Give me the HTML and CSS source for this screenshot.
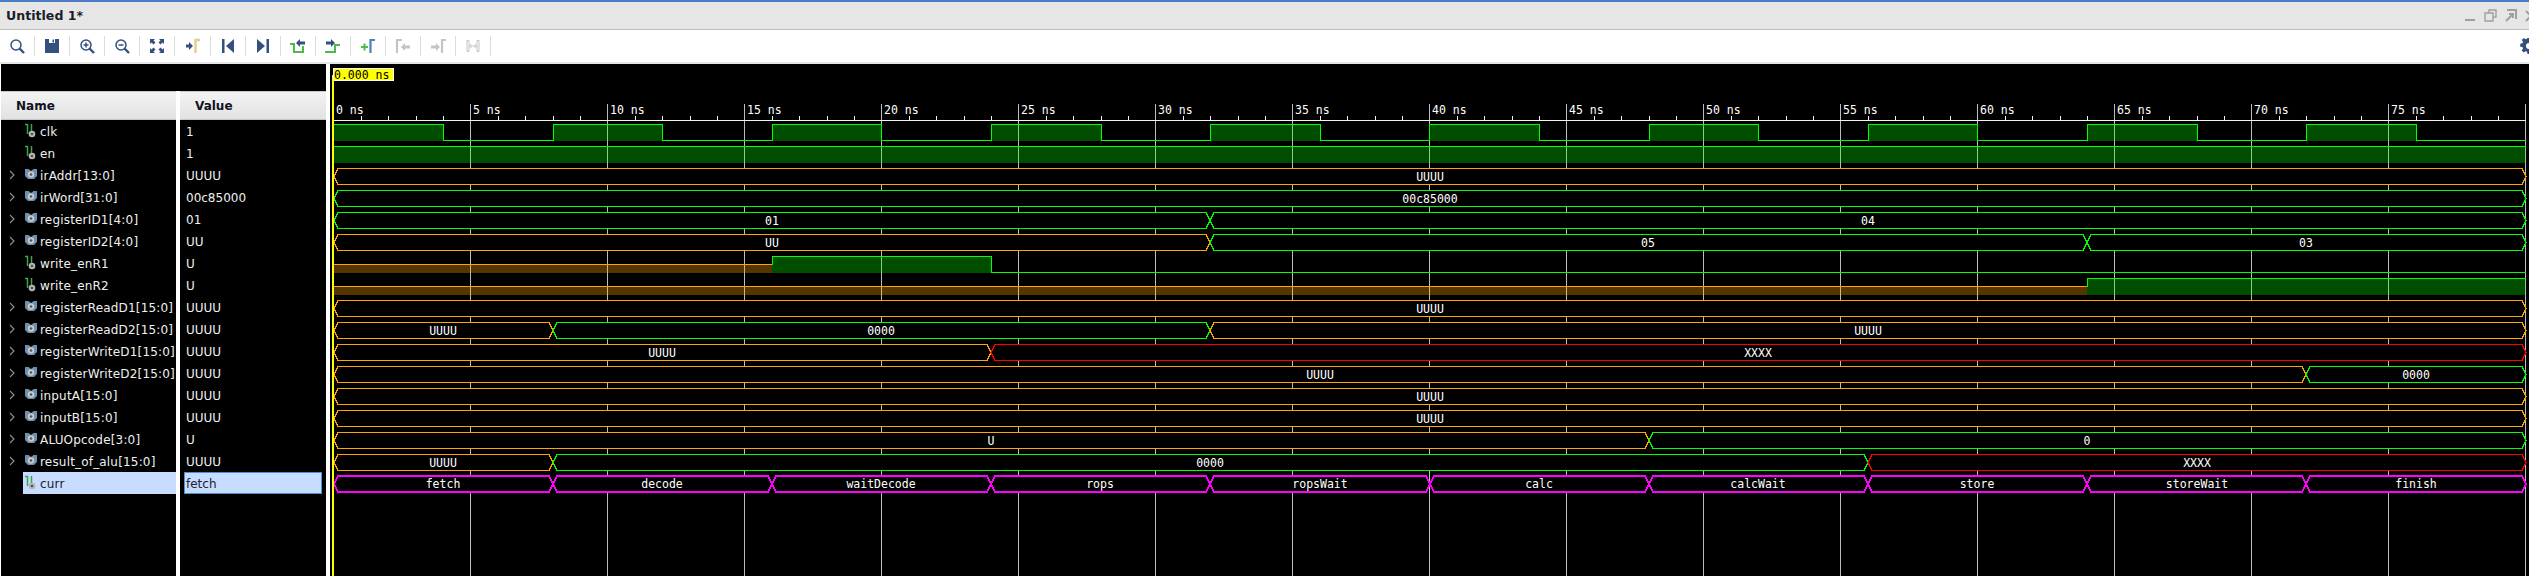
FILE: index.html
```html
<!DOCTYPE html>
<html lang="en">
<head>
<meta charset="utf-8">
<title>Untitled 1*</title>
<link rel="stylesheet" href="styles.css">
</head>
<body>
<svg class="defs" width="0" height="0" aria-hidden="true">
  <symbol id="caret" viewBox="0 0 6 10"><path d="M1 1l4 4-4 4" fill="none" stroke="#8a8a8a" stroke-width="1.2"/></symbol>
  <symbol id="bus" viewBox="0 0 14 12"><path d="M1 1h3.5L7 3l2.500-2H13v7l-3 3H4L1 8z" fill="#6f8fb0"/><circle cx="7" cy="6.500" r="3.200" fill="#c9c9c9"/><circle cx="7" cy="6.500" r="1.300" fill="#555"/></symbol>
  <symbol id="bit" viewBox="0 -1 14 16"><path d="M1 1.500h2.500V11M7.500 1v8" fill="none" stroke="#3fa34a" stroke-width="1.500"/><circle cx="8" cy="11" r="3.300" fill="#b4b4b4"/><circle cx="8" cy="11" r="1.300" fill="#555"/></symbol>
</svg>

<header class="titlebar">
  <span class="title">Untitled 1*</span>
  <div class="winctl">
    <svg class="wbtn" viewBox="0 0 14 14"><path d="M1 11h10" stroke="#a0a0a0" stroke-width="2"/></svg>
    <svg class="wbtn" viewBox="0 0 14 14"><path d="M5 4V1h7v7H9M1 4h8v8H1z" fill="none" stroke="#a0a0a0" stroke-width="1.400"/></svg>
    <svg class="wbtn" viewBox="0 0 14 14"><path d="M3 1h9v9M2 12l7-7M5 5h4v4" fill="none" stroke="#a0a0a0" stroke-width="2"/></svg>
    <svg class="wbtn" viewBox="0 0 14 14"><path d="M2 2l10 10M12 2L2 12" fill="none" stroke="#a0a0a0" stroke-width="2"/></svg>
  </div>
</header>

<nav class="toolbar">
  <span class="tool"><svg viewBox="0 0 16 16"><circle cx="7" cy="7" r="5" class="ln"/><path d="M10.500 10.500L15 15" class="ln thick"/></svg></span>
  <span class="tool"><svg viewBox="0 0 16 16"><path d="M1 1h14v14H1z" class="fl"/><path d="M5 1h6v4H5z" fill="#fff"/><path d="M8.500 1.500h1.500v3H8.500z" class="fl"/></svg></span>
  <span class="tool"><svg viewBox="0 0 16 16"><circle cx="7" cy="7" r="5" class="ln"/><path d="M10.500 10.500L15 15" class="ln thick"/><path d="M4.500 7h5M7 4.500v5" class="ln"/></svg></span>
  <span class="tool"><svg viewBox="0 0 16 16"><circle cx="7" cy="7" r="5" class="ln"/><path d="M10.500 10.500L15 15" class="ln thick"/><path d="M4.500 7h5" class="ln"/></svg></span>
  <span class="tool"><svg viewBox="0 0 16 16"><path d="M1 1h5L4.500 2.500l2 2-2 2-2-2L1 6zM15 1v5l-1.500-1.500-2 2-2-2 2-2L10 1zM1 15v-5l1.500 1.500 2-2 2 2-2 2L6 15zM15 15h-5l1.500-1.500-2-2 2-2 2 2L15 10z" class="fl"/></svg></span>
  <span class="tool"><svg viewBox="0 0 16 16"><path d="M1 6.500h3V4l4 4-4 4V9.500H1z" class="fl"/><path d="M10.500 15V2H15" fill="none" stroke="#e3cf85" stroke-width="2.400"/></svg></span>
  <span class="tool"><svg viewBox="0 0 16 16"><path d="M2 1h2.500v14H2zM14 1v14L6 8z" class="fl"/></svg></span>
  <span class="tool"><svg viewBox="0 0 16 16"><path d="M11.500 1H14v14h-2.500zM2 1v14l8-7z" class="fl"/></svg></span>
  <span class="tool"><svg viewBox="0 0 16 16"><path d="M0 6h4v8h9V8" fill="none" stroke="#4cbb4c" stroke-width="2"/><path d="M15 3.500H10V1L6 5l4 4V6.500h5z" class="fl"/></svg></span>
  <span class="tool"><svg viewBox="0 0 16 16"><path d="M0 14h10V7h5" fill="none" stroke="#4cbb4c" stroke-width="2"/><path d="M1 3.500h5V1l4 4-4 4V6.500H1z" class="fl"/></svg></span>
  <span class="tool"><svg viewBox="0 0 16 16"><path d="M1 9h7M4.500 5.500v7" fill="none" stroke="#4cbb4c" stroke-width="2"/><path d="M10.500 15V2H15" fill="none" stroke="#4a83b8" stroke-width="2.200"/></svg></span>
  <span class="tool"><svg viewBox="0 0 16 16"><path d="M2 15V2h5" class="gr"/><path d="M15 7.500h-5V5L6 9l4 4v-2.500h5z" fill="#c4c4c4"/></svg></span>
  <span class="tool"><svg viewBox="0 0 16 16"><path d="M1 7.500h5V5l4 4-4 4v-2.500H1z" fill="#c4c4c4"/><path d="M12 15V2h4" class="gr"/></svg></span>
  <span class="tool"><svg viewBox="0 0 16 16"><path d="M2 2.500h2v11H2zM12 2.500h2v11h-2z" fill="none" stroke="#c4c4c4"/><path d="M4.500 8h7M6.500 6l-2 2 2 2M9.500 6l2 2-2 2" fill="none" stroke="#c4c4c4"/></svg></span>
  <span class="tool-spacer"></span>
  <svg class="gear" viewBox="0 0 16 16"><path d="M6.500 0h3l.4 2.200 1.500.6L13.200 1.500l2.100 2.100-1.300 1.800.6 1.500 2.200.4v3l-2.200.4-.6 1.500 1.300 1.800-2.100 2.100-1.800-1.300-1.500.6L9.500 16h-3l-.4-2.200-1.500-.6-1.800 1.300L.7 12.400 2 10.600 1.400 9.100-.8 8.700v-3L1.400 5.300 2 3.800 .7 2 2.800 -.1 4.600 1.200l1.500-.6zM8 5a3 3 0 100 6 3 3 0 000-6z" fill="#34507f" fill-rule="evenodd"/></svg>
</nav>

<main class="main">
  <section class="sidepanel">
    <div class="topstrip"></div>
    <div class="columns">
      <div class="col names">
        <div class="colhead">Name</div>
        <div class="sig"><span class="caret"></span><span class="label"><svg class="ico"><use href="#bit"/></svg>clk</span></div>
        <div class="sig"><span class="caret"></span><span class="label"><svg class="ico"><use href="#bit"/></svg>en</span></div>
        <div class="sig"><span class="caret"><svg><use href="#caret"/></svg></span><span class="label"><svg class="ico"><use href="#bus"/></svg>irAddr[13:0]</span></div>
        <div class="sig"><span class="caret"><svg><use href="#caret"/></svg></span><span class="label"><svg class="ico"><use href="#bus"/></svg>irWord[31:0]</span></div>
        <div class="sig"><span class="caret"><svg><use href="#caret"/></svg></span><span class="label"><svg class="ico"><use href="#bus"/></svg>registerID1[4:0]</span></div>
        <div class="sig"><span class="caret"><svg><use href="#caret"/></svg></span><span class="label"><svg class="ico"><use href="#bus"/></svg>registerID2[4:0]</span></div>
        <div class="sig"><span class="caret"></span><span class="label"><svg class="ico"><use href="#bit"/></svg>write_enR1</span></div>
        <div class="sig"><span class="caret"></span><span class="label"><svg class="ico"><use href="#bit"/></svg>write_enR2</span></div>
        <div class="sig"><span class="caret"><svg><use href="#caret"/></svg></span><span class="label"><svg class="ico"><use href="#bus"/></svg>registerReadD1[15:0]</span></div>
        <div class="sig"><span class="caret"><svg><use href="#caret"/></svg></span><span class="label"><svg class="ico"><use href="#bus"/></svg>registerReadD2[15:0]</span></div>
        <div class="sig"><span class="caret"><svg><use href="#caret"/></svg></span><span class="label"><svg class="ico"><use href="#bus"/></svg>registerWriteD1[15:0]</span></div>
        <div class="sig"><span class="caret"><svg><use href="#caret"/></svg></span><span class="label"><svg class="ico"><use href="#bus"/></svg>registerWriteD2[15:0]</span></div>
        <div class="sig"><span class="caret"><svg><use href="#caret"/></svg></span><span class="label"><svg class="ico"><use href="#bus"/></svg>inputA[15:0]</span></div>
        <div class="sig"><span class="caret"><svg><use href="#caret"/></svg></span><span class="label"><svg class="ico"><use href="#bus"/></svg>inputB[15:0]</span></div>
        <div class="sig"><span class="caret"><svg><use href="#caret"/></svg></span><span class="label"><svg class="ico"><use href="#bus"/></svg>ALUOpcode[3:0]</span></div>
        <div class="sig"><span class="caret"><svg><use href="#caret"/></svg></span><span class="label"><svg class="ico"><use href="#bus"/></svg>result_of_alu[15:0]</span></div>
        <div class="sig selected"><span class="caret"></span><span class="label"><svg class="ico"><use href="#bit"/></svg>curr</span></div>
      </div>
      <div class="col values">
        <div class="colhead">Value</div>
        <div class="val">1</div>
        <div class="val">1</div>
        <div class="val">UUUU</div>
        <div class="val">00c85000</div>
        <div class="val">01</div>
        <div class="val">UU</div>
        <div class="val">U</div>
        <div class="val">U</div>
        <div class="val">UUUU</div>
        <div class="val">UUUU</div>
        <div class="val">UUUU</div>
        <div class="val">UUUU</div>
        <div class="val">UUUU</div>
        <div class="val">UUUU</div>
        <div class="val">U</div>
        <div class="val">UUUU</div>
        <div class="val selected">fetch</div>
      </div>
    </div>
  </section>

  <section class="wavepanel">
    <svg class="wave" width="2199" height="512" viewBox="330 64 2199 512">
      <!-- grid and ruler -->
      <path class="grid" d="M470.500 104V576M607.500 104V576M744.500 104V576M881.500 104V576M1018.500 104V576M1155.500 104V576M1292.500 104V576M1429.500 104V576M1566.500 104V576M1703.500 104V576M1840.500 104V576M1977.500 104V576M2114.500 104V576M2251.500 104V576M2388.500 104V576M2525.500 104V576"/>
      <path class="rule" d="M333 120.500H2526"/>
      <path class="rule" d="M361.500 116v4M388.500 116v4M416.500 116v4M443.500 116v4M498.500 116v4M525.500 116v4M553.500 116v4M580.500 116v4M635.500 116v4M662.500 116v4M690.500 116v4M717.500 116v4M772.500 116v4M799.500 116v4M827.500 116v4M854.500 116v4M909.500 116v4M936.500 116v4M964.500 116v4M991.500 116v4M1046.500 116v4M1073.500 116v4M1101.500 116v4M1128.500 116v4M1183.500 116v4M1210.500 116v4M1238.500 116v4M1265.500 116v4M1320.500 116v4M1347.500 116v4M1375.500 116v4M1402.500 116v4M1457.500 116v4M1484.500 116v4M1512.500 116v4M1539.500 116v4M1594.500 116v4M1621.500 116v4M1649.500 116v4M1676.500 116v4M1731.500 116v4M1758.500 116v4M1786.500 116v4M1813.500 116v4M1868.500 116v4M1895.500 116v4M1923.500 116v4M1950.500 116v4M2005.500 116v4M2032.500 116v4M2060.500 116v4M2087.500 116v4M2142.500 116v4M2169.500 116v4M2197.500 116v4M2224.500 116v4M2279.500 116v4M2306.500 116v4M2334.500 116v4M2361.500 116v4M2416.500 116v4M2443.500 116v4M2471.500 116v4M2498.500 116v4"/>
      <g class="tick">
        <text x="336" y="114">0 ns</text><text x="473" y="114">5 ns</text><text x="610" y="114">10 ns</text><text x="747" y="114">15 ns</text><text x="884" y="114">20 ns</text><text x="1021" y="114">25 ns</text><text x="1158" y="114">30 ns</text><text x="1295" y="114">35 ns</text><text x="1432" y="114">40 ns</text><text x="1569" y="114">45 ns</text><text x="1706" y="114">50 ns</text><text x="1843" y="114">55 ns</text><text x="1980" y="114">60 ns</text><text x="2117" y="114">65 ns</text><text x="2254" y="114">70 ns</text><text x="2391" y="114">75 ns</text>
      </g>

      <!-- clk -->
      <path class="fillg" d="M334 124h109v17H334zM553 124h109v17H553zM772 124h110v17H772zM991 124h110v17H991zM1210 124h110v17H1210zM1430 124h109v17H1430zM1649 124h109v17H1649zM1868 124h110v17H1868zM2087 124h110v17H2087zM2306 124h110v17H2306z"/>
      <path class="g trace" d="M334 124.500H443.500V140.500H553.500V124.500H662.500V140.500H772.500V124.500H881.500V140.500H991.500V124.500H1101.500V140.500H1210.500V124.500H1320.500V140.500H1429.500V124.500H1539.500V140.500H1649.500V124.500H1758.500V140.500H1868.500V124.500H1977.500V140.500H2087.500V124.500H2197.500V140.500H2306.500V124.500H2416.500V140.500H2526"/>
      <!-- en -->
      <path class="fillg" d="M334 146h2192v17H334z"/>
      <path class="g trace" d="M334 146.500H2526"/>

      <!-- write_enR1 -->
      <path class="fillo" d="M334 264h438v9H334z"/>
      <path class="o trace" d="M334 264.500H772.500"/>
      <path class="fillg" d="M772 256h219v17H772z"/>
      <path class="g trace" d="M772.500 264.500V256.500H991.500V272.500H2526"/>
      <!-- write_enR2 -->
      <path class="fillo" d="M334 286h1753v9H334z"/>
      <path class="o trace" d="M334 286.500H2087.500"/>
      <path class="fillg" d="M2087 278h439v17H2087z"/>
      <path class="g trace" d="M2087.500 286.500V278.500H2526"/>

      <!-- buses -->
      <g transform="translate(0 168.500)"><polygon class="o hex" points="334,8 338,0 2522,0 2526,8 2522,16 338,16"/><text class="vt" x="1430" y="12">UUUU</text></g>
      <g transform="translate(0 190.500)"><polygon class="g hex" points="334,8 338,0 2522,0 2526,8 2522,16 338,16"/><text class="vt" x="1430" y="12">00c85000</text></g>
      <g transform="translate(0 212.500)">
        <polygon class="g hex" points="334,8 338,0 1206,0 1210,8 1206,16 338,16"/><text class="vt" x="772" y="12">01</text>
        <polygon class="g hex" points="1210,8 1214,0 2522,0 2526,8 2522,16 1214,16"/><text class="vt" x="1868" y="12">04</text>
      </g>
      <g transform="translate(0 234.500)">
        <polygon class="o hex" points="334,8 338,0 1206,0 1210,8 1206,16 338,16"/><text class="vt" x="772" y="12">UU</text>
        <polygon class="g hex" points="1210,8 1214,0 2083,0 2087,8 2083,16 1214,16"/><text class="vt" x="1648" y="12">05</text>
        <polygon class="g hex" points="2087,8 2091,0 2522,0 2526,8 2522,16 2091,16"/><text class="vt" x="2306" y="12">03</text>
      </g>
      <g transform="translate(0 300.500)"><polygon class="o hex" points="334,8 338,0 2522,0 2526,8 2522,16 338,16"/><text class="vt" x="1430" y="12">UUUU</text></g>
      <g transform="translate(0 322.500)">
        <polygon class="o hex" points="334,8 338,0 549,0 553,8 549,16 338,16"/><text class="vt" x="443" y="12">UUUU</text>
        <polygon class="g hex" points="553,8 557,0 1206,0 1210,8 1206,16 557,16"/><text class="vt" x="881" y="12">0000</text>
        <polygon class="o hex" points="1210,8 1214,0 2522,0 2526,8 2522,16 1214,16"/><text class="vt" x="1868" y="12">UUUU</text>
      </g>
      <g transform="translate(0 344.500)">
        <polygon class="o hex" points="334,8 338,0 987,0 991,8 987,16 338,16"/><text class="vt" x="662" y="12">UUUU</text>
        <polygon class="r hex" points="991,8 995,0 2522,0 2526,8 2522,16 995,16"/><text class="vt" x="1758" y="12">XXXX</text>
      </g>
      <g transform="translate(0 366.500)">
        <polygon class="o hex" points="334,8 338,0 2302,0 2306,8 2302,16 338,16"/><text class="vt" x="1320" y="12">UUUU</text>
        <polygon class="g hex" points="2306,8 2310,0 2522,0 2526,8 2522,16 2310,16"/><text class="vt" x="2416" y="12">0000</text>
      </g>
      <g transform="translate(0 388.500)"><polygon class="o hex" points="334,8 338,0 2522,0 2526,8 2522,16 338,16"/><text class="vt" x="1430" y="12">UUUU</text></g>
      <g transform="translate(0 410.500)"><polygon class="o hex" points="334,8 338,0 2522,0 2526,8 2522,16 338,16"/><text class="vt" x="1430" y="12">UUUU</text></g>
      <g transform="translate(0 432.500)">
        <polygon class="o hex" points="334,8 338,0 1645,0 1649,8 1645,16 338,16"/><text class="vt" x="991" y="12">U</text>
        <polygon class="g hex" points="1649,8 1653,0 2522,0 2526,8 2522,16 1653,16"/><text class="vt" x="2087" y="12">0</text>
      </g>
      <g transform="translate(0 454.500)">
        <polygon class="o hex" points="334,8 338,0 549,0 553,8 549,16 338,16"/><text class="vt" x="443" y="12">UUUU</text>
        <polygon class="g hex" points="553,8 557,0 1864,0 1868,8 1864,16 557,16"/><text class="vt" x="1210" y="12">0000</text>
        <polygon class="r hex" points="1868,8 1872,0 2522,0 2526,8 2522,16 1872,16"/><text class="vt" x="2197" y="12">XXXX</text>
      </g>
      <g transform="translate(0 476)">
        <polygon class="m hex" points="334,8 338,0 549,0 553,8 549,16 338,16"/><text class="vt" x="443" y="12">fetch</text>
        <polygon class="m hex" points="553,8 557,0 768,0 772,8 768,16 557,16"/><text class="vt" x="662" y="12">decode</text>
        <polygon class="m hex" points="772,8 776,0 987,0 991,8 987,16 776,16"/><text class="vt" x="881" y="12">waitDecode</text>
        <polygon class="m hex" points="991,8 995,0 1206,0 1210,8 1206,16 995,16"/><text class="vt" x="1100" y="12">rops</text>
        <polygon class="m hex" points="1210,8 1214,0 1426,0 1430,8 1426,16 1214,16"/><text class="vt" x="1320" y="12">ropsWait</text>
        <polygon class="m hex" points="1430,8 1434,0 1645,0 1649,8 1645,16 1434,16"/><text class="vt" x="1539" y="12">calc</text>
        <polygon class="m hex" points="1649,8 1653,0 1864,0 1868,8 1864,16 1653,16"/><text class="vt" x="1758" y="12">calcWait</text>
        <polygon class="m hex" points="1868,8 1872,0 2083,0 2087,8 2083,16 1872,16"/><text class="vt" x="1977" y="12">store</text>
        <polygon class="m hex" points="2087,8 2091,0 2302,0 2306,8 2302,16 2091,16"/><text class="vt" x="2197" y="12">storeWait</text>
        <polygon class="m hex" points="2306,8 2310,0 2522,0 2526,8 2522,16 2310,16"/><text class="vt" x="2416" y="12">finish</text>
      </g>

      <!-- cursor -->
      <rect class="cursor" x="332" y="75" width="2" height="501"/>
      <rect class="flag" x="333" y="68" width="60" height="12"/>
      <text class="flagtext" x="334" y="79">0.000 ns</text>
    </svg>
  </section>
</main>
</body>
</html>
```
FILE: styles.css
```css
* { box-sizing: border-box; }
html, body { margin: 0; height: 100%; }
body {
  width: 2529px;
  height: 576px;
  overflow: hidden;
  background: #fff;
  font-family: "DejaVu Sans", sans-serif;
  font-size: 12px;
  display: flex;
  flex-direction: column;
}
.defs { position: absolute; }

.titlebar {
  height: 30px;
  flex: none;
  display: flex;
  align-items: center;
  padding-left: 6px;
  background: #e6e6e6;
  border-top: 2px solid #4a7cc4;
  border-bottom: 1px solid #bdbdbd;
  overflow: hidden;
}
.title { font-weight: bold; font-size: 12.6px; color: #1c1c2c; }
.winctl { margin-left: auto; display: flex; gap: 6px; margin-right: -9px; padding-top: 1px; }
.wbtn { width: 14px; height: 14px; }

.toolbar {
  height: 34px;
  flex: none;
  display: flex;
  align-items: flex-start;
  padding-top: 6px;
  background: #fff;
  border-bottom: 2px solid #e6e6e6;
  overflow: hidden;
}
.tool {
  width: 35.1px;
  height: 20px;
  flex: none;
  display: flex;
  align-items: center;
  justify-content: center;
  border-right: 1px solid #dcdcdc;
}
.tool svg { width: 16px; height: 16px; }
.ln { fill: none; stroke: #34507f; stroke-width: 1.5; }
.thick { stroke-width: 2.4; }
.fl { fill: #34507f; }
.gr { fill: none; stroke: #c4c4c4; stroke-width: 2.2; }
.tool-spacer { flex: 1; }
.gear { width: 16px; height: 16px; flex: none; margin-right: -8px; margin-top: 2px; overflow: visible; }

.main { flex: 1; display: flex; min-height: 0; background: #fff; padding-left: 1px; }
.sidepanel { width: 325px; flex: none; display: flex; flex-direction: column; }
.topstrip { height: 27px; background: #000; flex: none; }
.columns { flex: 1; display: flex; gap: 4px; }
.col { background: #000; display: flex; flex-direction: column; color: #f0f0f0; }
.names { width: 175px; flex: none; }
.values { flex: 1; }
.colhead {
  height: 29px;
  flex: none;
  display: flex;
  align-items: center;
  font-weight: bold;
  color: #111122;
  background: linear-gradient(#f3f3f3, #e2e2e2);
  border-bottom: 1px solid #c8c8c8;
  border-top: 1px solid #c8c8c8;
}
.names .colhead { padding-left: 15px; }
.values .colhead { padding-left: 15px; }

.sig { height: 22px; flex: none; display: flex; align-items: stretch; white-space: nowrap; letter-spacing: 0.18px; }
.caret { width: 22px; flex: none; display: flex; align-items: center; padding-left: 8px; }
.caret svg { width: 6px; height: 10px; }
.label { flex: 1; min-width: 0; display: flex; align-items: center; gap: 2px; padding: 2px 0 0 1px; }
.ico { width: 14px; height: 16px; flex: none; margin-top: -4px; }
.sig.selected .label { background: #c8dcff; color: #20202c; }

.val { height: 22px; flex: none; display: flex; align-items: center; padding: 2px 0 0 6px; }
.val.selected {
  margin: 0 4px;
  padding: 1px 0 0 1px;
  background: #c8dcff;
  border: 1px solid #4a90d9;
  color: #20202c;
}

.wavepanel { flex: 1; min-width: 0; margin-left: 4px; background: #000; }
.wave { display: block; }
.wave text { font-family: "DejaVu Sans Mono", monospace; font-size: 11.5px; fill: #fff; }
.grid { stroke: #bdbdbd; stroke-width: 1; fill: none; shape-rendering: crispEdges; }
.rule { stroke: #f4f4f4; stroke-width: 1; fill: none; shape-rendering: crispEdges; }
.trace { fill: none; shape-rendering: crispEdges; stroke-width: 1; }
.hex { fill: #000; stroke-width: 1; shape-rendering: crispEdges; }
.g { stroke: #00ff00; }
.o { stroke: #ffa500; }
.r { stroke: #ff0000; }
.m { stroke: #ff00ff; stroke-width: 2; }
.fillg { fill: rgba(0, 255, 0, 0.3); shape-rendering: crispEdges; }
.fillo { fill: rgba(255, 165, 0, 0.33); shape-rendering: crispEdges; }
.wave .vt { text-anchor: middle; }
.cursor { fill: #ffff00; }
.flag { fill: #ffff00; stroke: #fff; stroke-width: 1; shape-rendering: crispEdges; }
.wave .flagtext { fill: #000; }
```
